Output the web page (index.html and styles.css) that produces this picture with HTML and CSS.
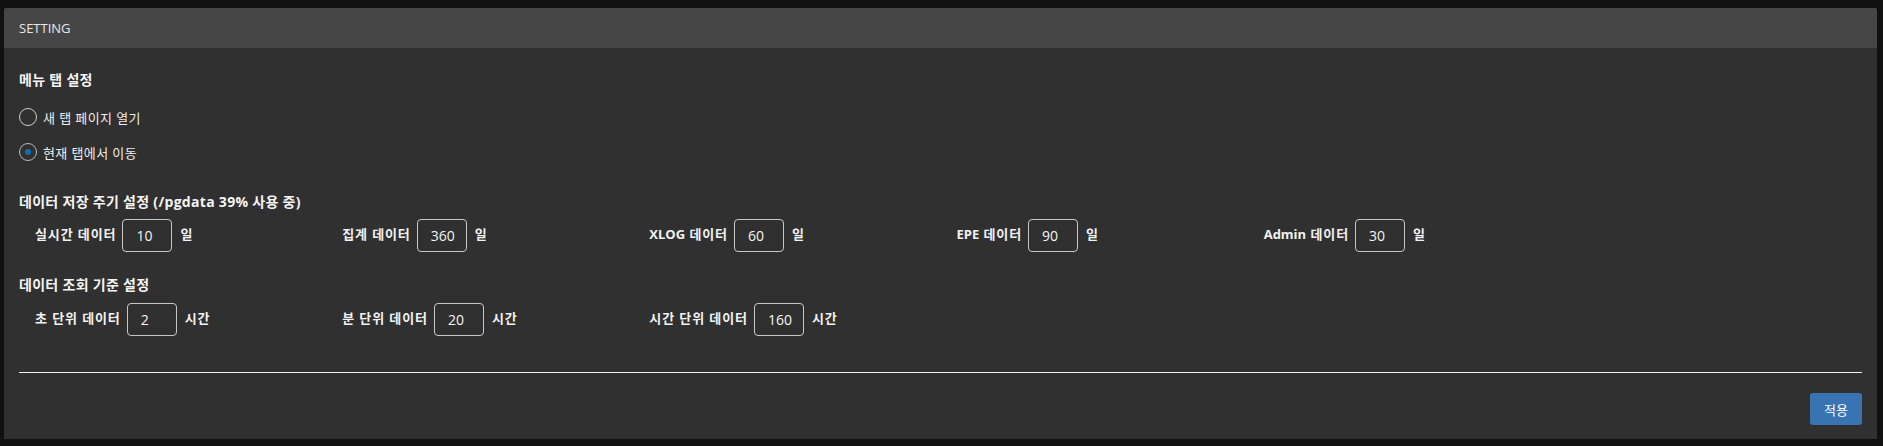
FILE: index.html
```html
<!DOCTYPE html>
<html lang="ko">
<head>
<meta charset="utf-8">
<title>SETTING</title>
<link rel="stylesheet" href="styles.css">
</head>
<body>
<div class="panel">
  <div class="panel-header">SETTING</div>
  <div class="panel-body">
    <div class="section-title t1">메뉴 탭 설정</div>
    <label class="radio-row r1"><span class="radio"></span><span>새 탭 페이지 열기</span></label>
    <label class="radio-row r2"><span class="radio checked"></span><span>현재 탭에서 이동</span></label>

    <div class="section-title t2">데이터 저장 주기 설정 (/pgdata 39% 사용 중)</div>
    <div class="field-grid">
      <div class="field"><span class="label">실시간 데이터</span><span class="box">10</span><span class="unit">일</span></div>
      <div class="field"><span class="label">집계 데이터</span><span class="box">360</span><span class="unit">일</span></div>
      <div class="field"><span class="label"><span class="lat">XLOG</span> 데이터</span><span class="box">60</span><span class="unit">일</span></div>
      <div class="field"><span class="label"><span class="lat">EPE</span> 데이터</span><span class="box">90</span><span class="unit">일</span></div>
      <div class="field"><span class="label"><span class="lat">Admin</span> 데이터</span><span class="box">30</span><span class="unit">일</span></div>
    </div>

    <div class="section-title t3">데이터 조회 기준 설정</div>
    <div class="field-grid">
      <div class="field"><span class="label">초 단위 데이터</span><span class="box">2</span><span class="unit">시간</span></div>
      <div class="field"><span class="label">분 단위 데이터</span><span class="box">20</span><span class="unit">시간</span></div>
      <div class="field"><span class="label">시간 단위 데이터</span><span class="box">160</span><span class="unit">시간</span></div>
    </div>

    <div class="divider"></div>
    <div class="actions"><button class="btn-apply">적용</button></div>
  </div>
</div>
</body>
</html>
```

FILE: styles.css
```css
html, body {
  margin: 0;
  background: #111111;
}
body {
  padding: 8px 6px 0 4px;
  font-family: "Open Sans", "Noto Sans CJK KR", sans-serif;
  color: #f2f2f2;
}
.panel {
  background: #303030;
  height: 431px;
  border-radius: 2px 2px 0 0;
  overflow: hidden;
}
.panel-header {
  height: 40px;
  line-height: 40px;
  background: #464646;
  padding-left: 15px;
  font-size: 13px;
  color: #e8e8e8;
}
.panel-body {
  padding: 22px 15px 0 15px;
}
.section-title {
  font-size: 14px;
  font-weight: 700;
  line-height: 20px;
  height: 20px;
  color: #f4f4f4;
  letter-spacing: 0.3px;
}
.t2 { margin-top: 30px; }
.t3 { margin-top: 23px; }
.radio-row {
  display: flex;
  align-items: center;
  gap: 6px;
  height: 20px;
  font-size: 13px;
  letter-spacing: 0.4px;
  color: #eeeeee;
}
.r1 { margin-top: 17px; }
.r2 { margin-top: 15px; }
.radio {
  width: 18px;
  height: 18px;
  box-sizing: border-box;
  border: 1.5px solid #d0d0d0;
  border-radius: 50%;
  display: flex;
  align-items: center;
  justify-content: center;
}
.radio.checked {
  border-color: #b8b8b8;
}
.radio.checked::after {
  content: "";
  width: 6px;
  height: 6px;
  border-radius: 50%;
  background: #0b70b4;
}
.field-grid {
  display: grid;
  grid-template-columns: repeat(6, 1fr);
  margin-top: 7px;
}
.t3 + .field-grid { margin-top: 8px; }
.field {
  display: flex;
  align-items: center;
  padding-left: 16px;
  height: 33px;
}
.label {
  font-size: 13px;
  font-weight: 700;
  color: #f2f2f2;
  margin-right: 6px;
  letter-spacing: 0.9px;
  position: relative;
  top: -2px;
}
.lat {
  letter-spacing: 0;
}
.box {
  box-sizing: border-box;
  width: 50px;
  height: 33px;
  border: 1px solid #c8c8c8;
  border-radius: 4px;
  font-size: 14px;
  line-height: 31px;
  padding-left: 13px;
  color: #f4f4f4;
}
.unit {
  font-size: 13px;
  font-weight: 700;
  margin-left: 8px;
  letter-spacing: 0.9px;
  position: relative;
  top: -2px;
}
.divider {
  margin-top: 36px;
  height: 1px;
  background: #f0f0f0;
}
.actions {
  display: flex;
  justify-content: flex-end;
  margin-top: 20px;
}
.btn-apply {
  width: 52px;
  height: 32px;
  border: none;
  border-radius: 3px;
  background: #3873b2;
  color: #ffffff;
  font-family: "Open Sans", "Noto Sans CJK KR", sans-serif;
  font-size: 13px;
  padding: 0;
}
```
